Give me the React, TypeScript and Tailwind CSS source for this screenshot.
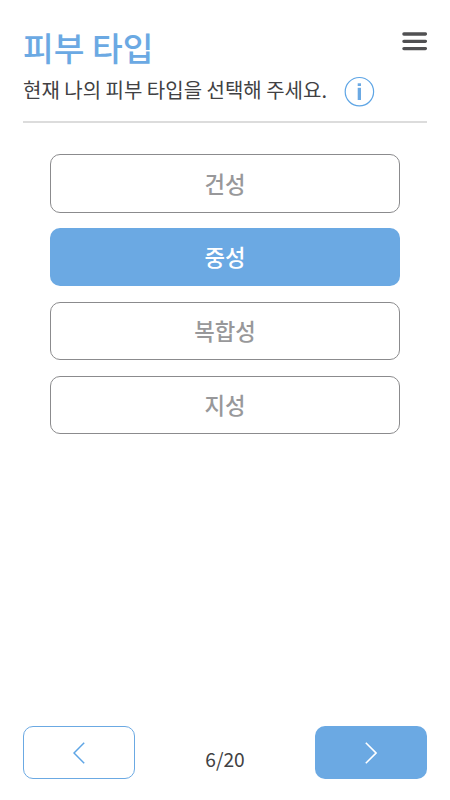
const options = ["건성", "중성", "복합성", "지성"];
const selected = "중성";

function Header() {
  return (
    <header className="border-b-2 border-[#dcdcdc] h-[123px] pt-6 mx-[23px]">
      <div className="flex justify-between">
        <h1 className="text-[33.4px] leading-[46px] font-medium text-[#6ba9e3]">피부 타입</h1>

        <button aria-label="메뉴" className="w-[25px] h-[19px] mt-2">
          <svg className="w-[25px] h-[19px]" viewBox="0 0 25 19" stroke="#505052" strokeWidth="3.3" strokeLinecap="round">
            <path d="M1.9 2H23.4M1.9 9.3H23.4M1.9 16.6H23.4" />
          </svg>
        </button>
      </div>

      <div className="flex items-start pt-[6px]">
        <p className="text-[20px] leading-[28px] text-[#414143] w-[321px] whitespace-nowrap">
          현재 나의 피부 타입을 선택해 주세요.
        </p>

        <svg className="w-[31px] h-[31px]" viewBox="0 0 31 31" fill="none">
          <circle cx="15.4" cy="15.7" r="14.2" stroke="#5ea5e5" strokeWidth="1.2" />
          <rect x="13.7" y="7.3" width="3.3" height="2.7" fill="#6ba9e3" />
          <rect x="13.7" y="11.8" width="3.3" height="12.2" fill="#6ba9e3" />
        </svg>
      </div>
    </header>
  );
}

function Options() {
  return (
    <main className="flex flex-col gap-[15.4px] px-[50px] pt-[31.2px]">
      {options.map((option) => (
        <button
          key={option}
          className={
            option === selected
              ? "h-[58.4px] rounded-[10px] bg-[#6ba9e3] text-[22.3px] font-medium text-white"
              : "h-[58.4px] rounded-[10px] border border-[#8b8b8d] text-[22.3px] font-medium text-[#98989a]"
          }
        >
          {option}
        </button>
      ))}
    </main>
  );
}

function Footer() {
  return (
    <footer className="flex justify-between mt-auto px-[23px] pb-[21px]">
      <button aria-label="이전" className="flex items-center justify-center rounded-[10px] border border-[#6ba9e3] h-[53px] w-[112px]">
        <svg className="w-3 h-[22px]" viewBox="0 0 12 22" fill="none" stroke="#5ea5e5" strokeWidth="1.5">
          <path d="M11.2 .8L1 11L11.2 21.2" />
        </svg>
      </button>

      <span className="text-[19.2px] leading-[30px] text-[#414143] pt-[18px]">6/20</span>

      <button aria-label="다음" className="flex items-center justify-center rounded-[10px] bg-[#6ba9e3] h-[53px] w-[112px]">
        <svg className="w-3 h-[22px]" viewBox="0 0 12 22" fill="none" stroke="white" strokeWidth="1.6">
          <path d="M.8 .8L11 11L.8 21.2" />
        </svg>
      </button>
    </footer>
  );
}

export default function App() {
  return (
    <div className="flex flex-col bg-white h-screen w-full font-['Noto_Sans_CJK_KR',sans-serif]">
      <Header />
      <Options />
      <Footer />
    </div>
  );
}
